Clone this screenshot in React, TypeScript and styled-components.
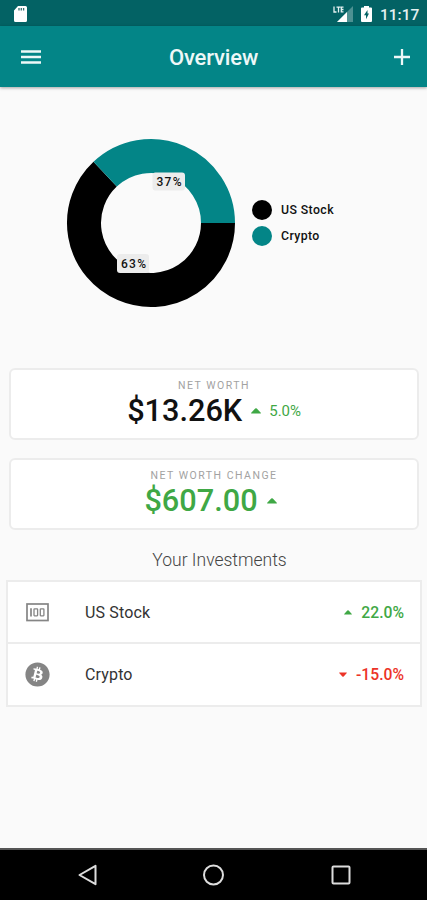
import React from "react";
import styled, { createGlobalStyle } from "styled-components";
import { FaBitcoin } from "react-icons/fa";

const TEAL = "#038587";
const GREEN = "#3fa845";
const RED = "#ec3327";

const GlobalStyle = createGlobalStyle`
  * { box-sizing: border-box; }
  body { margin: 0; background: #fafafa; font-family: Roboto, sans-serif; }
  svg { display: block; flex: none; }
`;

const Screen = styled.div`
  width: 427px;
  height: 900px;
  display: flex;
  flex-direction: column;
  background: #fafafa;
  overflow: hidden;
`;

const StatusBar = styled.div`
  height: 26px;
  flex: none;
  display: flex;
  align-items: center;
  padding: 2px 8px 0 13px;
  background: #036264;
  color: #e4f0f0;
`;

const StatusIcons = styled.div`
  margin-left: auto;
  display: flex;
  align-items: center;
  gap: 8px;
`;

const Clock = styled.span`
  width: 39px;
  font-size: 15.5px;
  font-weight: 500;
  line-height: 20px;
  padding-top: 1px;
  white-space: nowrap;
`;

const AppBar = styled.header`
  height: 61px;
  flex: none;
  display: grid;
  grid-template-columns: 22px 1fr 16px;
  align-items: center;
  padding: 1px 17px 0 20px;
  background: ${TEAL};
  color: #eef8f8;
  box-shadow: 0 1px 3px rgba(0, 0, 0, 0.35);
`;

const Title = styled.h1`
  margin: 0;
  padding-right: 9px;
  font-size: 22px;
  line-height: 28px;
  font-weight: 500;
  letter-spacing: -0.15px;
  text-align: center;
  padding-top: 2px;
`;

const ChartSection = styled.section`
  height: 281px;
  flex: none;
  display: flex;
  padding: 51px 0 0 66px;
`;

const Legend = styled.ul`
  list-style: none;
  margin: 59px 0 0 16px;
  padding: 0;
`;

const LegendItem = styled.li<{ $color: string }>`
  height: 26px;
  display: flex;
  align-items: center;
  gap: 9px;
  font-size: 12.3px;
  font-weight: 500;
  letter-spacing: 0.4px;
  color: #111;
  &::before {
    content: "";
    width: 20px;
    height: 20px;
    border-radius: 50%;
    background: ${(p) => p.$color};
  }
`;

const Card = styled.section`
  height: 72px;
  flex: none;
  margin: 0 8px 18px 9px;
  padding-top: 10px;
  border: 2px solid #ececec;
  border-radius: 6px;
  background: #fff;
  display: flex;
  flex-direction: column;
  align-items: center;
`;

const CardLabel = styled.div`
  font-size: 10.5px;
  line-height: 12px;
  letter-spacing: 1.5px;
  color: #a2a2a2;
`;

const AmountRow = styled.div`
  display: flex;
  align-items: center;
  gap: 9px;
  height: 38px;
`;

const Amount = styled.span<{ $color: string }>`
  font-size: 30.7px;
  line-height: 38px;
  font-weight: 500;
  color: ${(p) => p.$color};
`;

const Delta = styled.span<{ $empty: boolean }>`
  display: flex;
  align-items: center;
  gap: 8px;
  padding-right: ${(p) => (p.$empty ? 7 : 0)}px;
  font-size: 15px;
  letter-spacing: -0.05px;
  font-weight: 400;
  color: ${GREEN};
`;

const ListTitle = styled.h2`
  margin: 0 0 8px;
  padding-left: 12px;
  font-size: 17.5px;
  line-height: 24px;
  font-weight: 300;
  color: #444;
  text-align: center;
`;

const List = styled.div`
  margin: 0 5px 0 6px;
  border: 2px solid #ececec;
  background: #fff;
`;

const Row = styled.div`
  height: 60px;
  display: flex;
  align-items: center;
  padding: 0 16px;
  color: #858585;
  & + & {
    height: 63px;
    border-top: 2px solid #ececec;
  }
`;

const RowIcon = styled.span`
  width: 26px;
  display: flex;
  justify-content: center;
`;

const RowName = styled.span`
  margin-left: 35px;
  font-size: 16px;
  letter-spacing: 0.15px;
  color: #333;
`;

const RowChange = styled.span<{ $color: string }>`
  margin-left: auto;
  display: flex;
  align-items: center;
  gap: 9px;
  font-size: 15.7px;
  font-weight: 500;
  color: ${(p) => p.$color};
`;

const NavBar = styled.nav`
  height: 52px;
  flex: none;
  margin-top: auto;
  display: flex;
  align-items: center;
  justify-content: space-between;
  padding: 0 76px 0 77px;
  background: #000;
  border-top: 2px solid #555;
`;

function Caret({ down = false, width = 10 }: { down?: boolean; width?: number }) {
  return (
    <svg width={width} height={width / 2 + 1} viewBox="0 0 10 6" fill="currentColor">
      {down ? (
        <path d="M0.7 0.4h8.6q.8.1.5.8L5.8 5.4q-.8.7-1.6 0L.2 1.2q-.3-.7.5-.8z" />
      ) : (
        <path d="M.7 5.6h8.6q.8-.1.5-.8L5.8.6q-.8-.7-1.6 0L.2 4.8q-.3.7.5.8z" />
      )}
    </svg>
  );
}

function Donut() {
  const cx = 85, cy = 85, r = 67, angle = (133.2 * Math.PI) / 180;
  const x = cx + r * Math.cos(angle);
  const y = cy - r * Math.sin(angle);
  return (
    <svg width="170" height="170" viewBox="0 0 170 170" fontFamily="Roboto, sans-serif" fontSize="12" fontWeight="500">
      <path d={`M${cx + r} ${cy}A${r} ${r} 0 1 1 ${x} ${y}`} fill="none" stroke="#000" strokeWidth="34" />
      <path d={`M${cx + r} ${cy}A${r} ${r} 0 0 0 ${x} ${y}`} fill="none" stroke={TEAL} strokeWidth="34" />
      <rect x="86.500" y="34.500" width="32.500" height="18" rx="3" fill="#ececec" />
      <text x="90.500" y="48" textLength="25" fill="#111">37%</text>
      <rect x="51" y="116" width="32" height="19" rx="3" fill="#ececec" />
      <text x="55" y="129.500" textLength="25" fill="#111">63%</text>
    </svg>
  );
}

function SdCardIcon() {
  return (
    <svg width="15" height="17" viewBox="0 0 15 17">
      <path d="M5 0h7.500A1.500 1.500 0 0 1 14 1.500v13a1.500 1.500 0 0 1-1.500 1.500h-10A1.500 1.500 0 0 1 1 14.500V4.500z" fill="#fff" />
      <path d="M6 2v2.500M8.300 2v2.500M10.600 2v2.500" stroke="#346f70" strokeWidth="1.300" />
    </svg>
  );
}

function SignalIcon() {
  return (
    <svg width="20" height="17" viewBox="0 0 20 17">
      <path d="M20 0v16H4z" fill="#4d9192" />
      <path d="M14 6v10H4z" fill="#fff" />
      <path d="M1 .5v5.500h2.500M3.500 1.100h4M5.500 1.100v5.500M10.500 1.100H8.300v4.800h2.200M8.300 3.500h2.200" fill="none" stroke="#e6f2f2" strokeWidth="1.300" />
    </svg>
  );
}

function BatteryIcon() {
  return (
    <svg width="11" height="17" viewBox="0 0 11 17">
      <path d="M3 0h5v1.600h2q1 0 1 1V15q0 1-1 1H1q-1 0-1-1V2.600q0-1 1-1h2z" fill="#fff" />
      <path d="M6.500 4L3 9.300h2v3.900l3-5.700H6.500z" fill="#036264" />
    </svg>
  );
}

function BanknoteIcon() {
  return (
    <svg width="23" height="19" viewBox="0 0 23 19" fill="none" stroke="currentColor">
      <rect x="1" y="1" width="21" height="16.500" strokeWidth="1.700" />
      <path d="M5 5.200v8.300" strokeWidth="1.700" />
      <rect x="8" y="5.800" width="3.600" height="7" rx=".5" strokeWidth="1.300" />
      <rect x="14.300" y="5.800" width="3.600" height="7" rx=".5" strokeWidth="1.300" />
    </svg>
  );
}

const cards = [
  { label: "NET WORTH", amount: "$13.26K", color: "#111", delta: "5.0%" },
  { label: "NET WORTH CHANGE", amount: "$607.00", color: GREEN, delta: "" },
];

const investments = [
  { name: "US Stock", icon: <BanknoteIcon />, change: "22.0%", down: false },
  { name: "Crypto", icon: <FaBitcoin size={25} />, change: "-15.0%", down: true },
];

export default function App() {
  return (
    <Screen>
      <GlobalStyle />
      <StatusBar>
        <SdCardIcon />
        <StatusIcons>
          <SignalIcon />
          <BatteryIcon />
          <Clock>11:17</Clock>
        </StatusIcons>
      </StatusBar>
      <AppBar>
        <svg width="22" height="16" viewBox="0 0 22 16" stroke="currentColor" strokeWidth="2.700">
          <path d="M1 2.500h20M1 8h20M1 13.500h20" />
        </svg>
        <Title>Overview</Title>
        <svg width="16" height="16" viewBox="0 0 16 16" stroke="currentColor" strokeWidth="2.300">
          <path d="M0 8h16M8 0v16" />
        </svg>
      </AppBar>
      <ChartSection>
        <Donut />
        <Legend>
          <LegendItem $color="#000">US Stock</LegendItem>
          <LegendItem $color={TEAL}>Crypto</LegendItem>
        </Legend>
      </ChartSection>
      {cards.map((c) => (
        <Card key={c.label}>
          <CardLabel>{c.label}</CardLabel>
          <AmountRow>
            <Amount $color={c.color}>{c.amount}</Amount>
            <Delta $empty={!c.delta}>
              <Caret />
              {c.delta}
            </Delta>
          </AmountRow>
        </Card>
      ))}
      <ListTitle>Your Investments</ListTitle>
      <List>
        {investments.map((i) => (
          <Row key={i.name}>
            <RowIcon>{i.icon}</RowIcon>
            <RowName>{i.name}</RowName>
            <RowChange $color={i.down ? RED : GREEN}>
              <Caret down={i.down} width={8} />
              {i.change}
            </RowChange>
          </Row>
        ))}
      </List>
      <NavBar>
        <svg width="20" height="22" viewBox="0 0 20 22" fill="none" stroke="#ddd" strokeWidth="2">
          <path d="M18.500 1.800v18.400L2.500 11z" strokeLinejoin="round" />
        </svg>
        <svg width="22" height="22" viewBox="0 0 22 22" fill="none" stroke="#ddd" strokeWidth="2">
          <circle cx="10.500" cy="11" r="9.500" />
        </svg>
        <svg width="20" height="22" viewBox="0 0 20 22" fill="none" stroke="#ddd" strokeWidth="2">
          <rect x="1.500" y="2.500" width="17" height="17" rx="1" />
        </svg>
      </NavBar>
    </Screen>
  );
}
